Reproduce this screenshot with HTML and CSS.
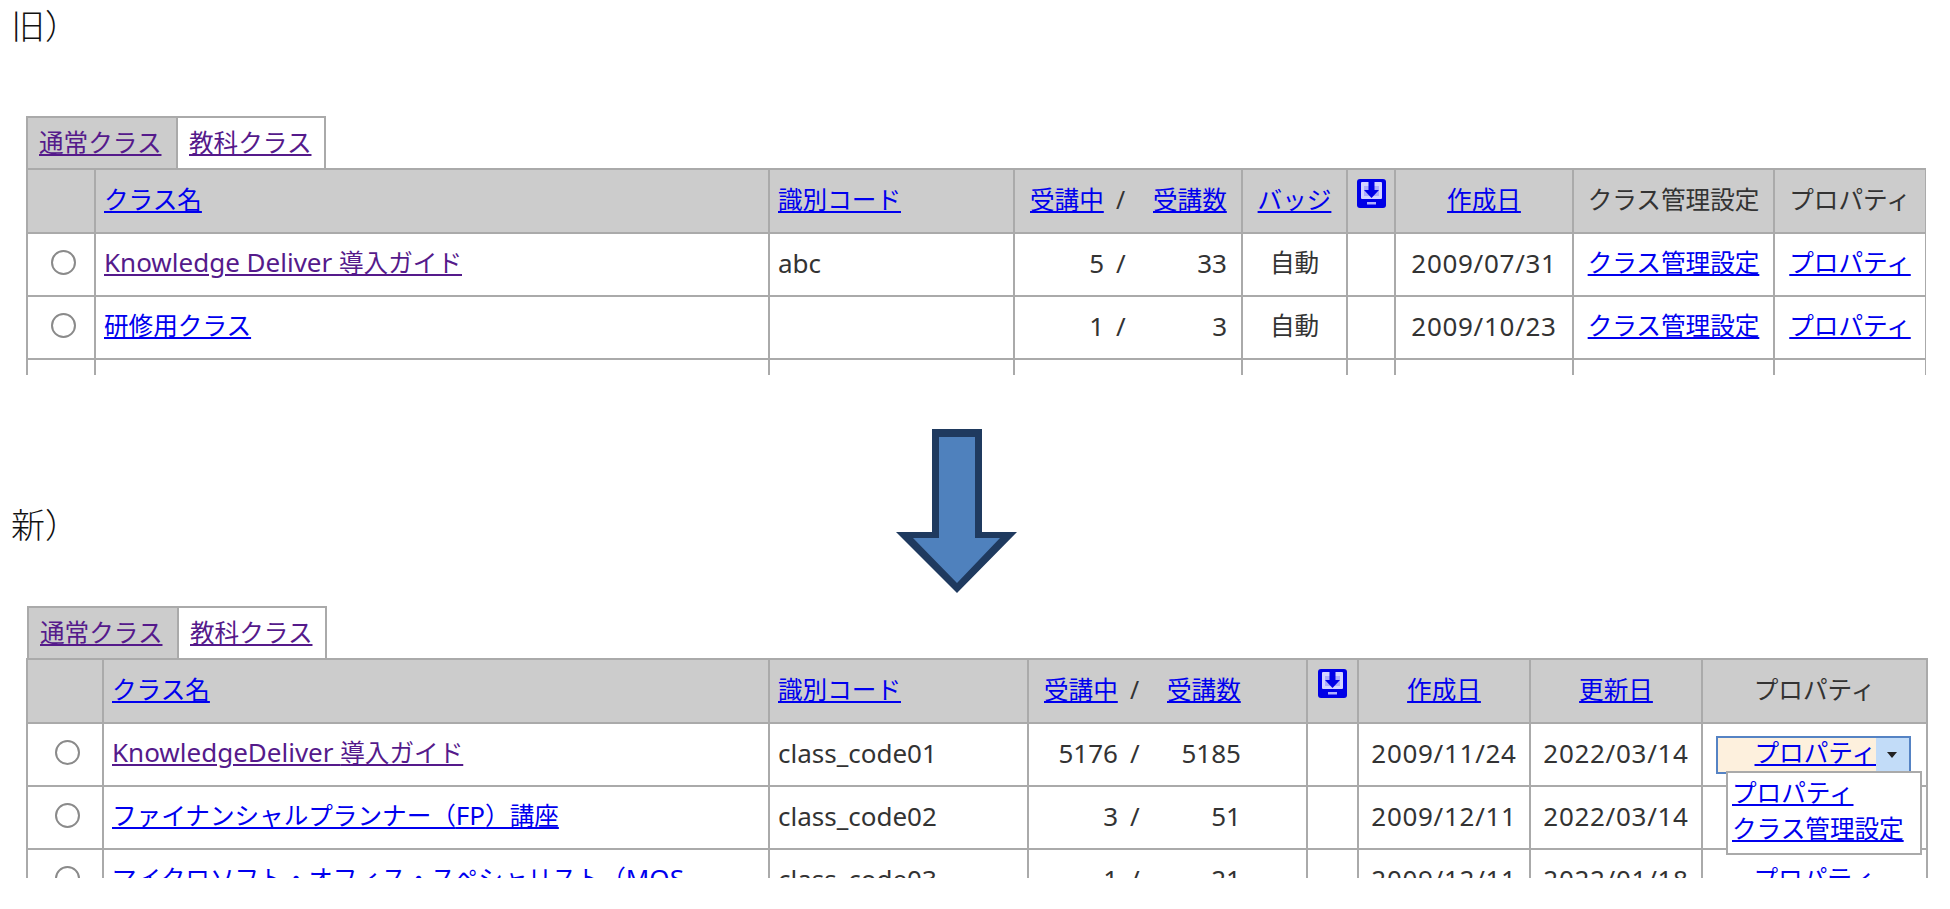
FILE: index.html
```html
<!DOCTYPE html>
<html lang="ja">
<head>
<meta charset="utf-8">
<title>クラス一覧 新旧比較</title>
<link rel="stylesheet" href="styles.css">
</head>
<body>
<section class="old">
  <h2 class="label label-old">旧）</h2>
  <ul class="tabs">
    <li class="tab tab-off"><a class="seen" href="#">通常クラス</a></li>
    <li class="tab tab-on"><a class="seen" href="#">教科クラス</a></li>
  </ul>
  <div class="clip clip-old">
    <table class="grid grid-old">
      <colgroup><col class="o1"><col class="o2"><col class="o3"><col class="o4"><col class="o5"><col class="o6"><col class="o7"><col class="o8"><col class="o9"></colgroup>
      <thead>
        <tr>
          <th></th>
          <th class="left"><a href="#">クラス名</a></th>
          <th class="left"><a href="#">識別コード</a></th>
          <th class="left"><div class="count"><a href="#">受講中</a><span class="slash">/</span><a href="#">受講数</a></div></th>
          <th><a href="#">バッジ</a></th>
          <th class="top"><a href="#" class="dl"><svg viewBox="0 0 29 29" width="29" height="29"><rect width="29" height="29" rx="3" fill="#0000e6"/><rect x="4" y="3" width="21" height="17" rx="1" fill="#d4d4ff"/><path d="M7 7h15v10H7z" fill="#aeaefa"/><path d="M11.500 3h6v8h4.500l-7.500 8L7 11h4.500z" fill="#0000e6"/><rect x="10" y="23" width="9" height="2.500" fill="#b0b0ff"/></svg></a></th>
          <th><a href="#">作成日</a></th>
          <th>クラス管理設定</th>
          <th>プロパティ</th>
        </tr>
      </thead>
      <tbody>
        <tr>
          <td class="center"><input class="radio" type="radio" name="old"></td>
          <td><a class="seen" href="#"><span class="la">Knowledge Deliver </span>導入ガイド</a></td>
          <td class="la">abc</td>
          <td class="la"><div class="count"><span class="r">5</span><span class="slash">/</span><span class="r">33</span></div></td>
          <td class="center">自動</td>
          <td></td>
          <td class="center date">2009/07/31</td>
          <td class="center"><a href="#">クラス管理設定</a></td>
          <td class="center"><a href="#">プロパティ</a></td>
        </tr>
        <tr>
          <td class="center"><input class="radio" type="radio" name="old"></td>
          <td><a href="#">研修用クラス</a></td>
          <td></td>
          <td class="la"><div class="count"><span class="r">1</span><span class="slash">/</span><span class="r">3</span></div></td>
          <td class="center">自動</td>
          <td></td>
          <td class="center date">2009/10/23</td>
          <td class="center"><a href="#">クラス管理設定</a></td>
          <td class="center"><a href="#">プロパティ</a></td>
        </tr>
        <tr><td></td><td></td><td></td><td></td><td></td><td></td><td></td><td></td><td></td></tr>
      </tbody>
    </table>
  </div>
</section>

<div class="divider">
  <h2 class="label label-new">新）</h2>
  <svg class="arrow" viewBox="0 0 121 164" width="121" height="164">
    <path d="M36 0h50v103h35L61 164 0 103h36z" fill="#1f3a5f"/>
    <path d="M43 8h36v101h25L61 154 17 109h26z" fill="#4f81bd"/>
  </svg>
</div>

<section class="new">
  <ul class="tabs">
    <li class="tab tab-off"><a class="seen" href="#">通常クラス</a></li>
    <li class="tab tab-on"><a class="seen" href="#">教科クラス</a></li>
  </ul>
  <div class="clip clip-new">
    <table class="grid grid-new">
      <colgroup><col class="n1"><col class="n2"><col class="n3"><col class="n4"><col class="n5"><col class="n6"><col class="n7"><col class="n8"></colgroup>
      <thead>
        <tr>
          <th></th>
          <th class="left"><a href="#">クラス名</a></th>
          <th class="left"><a href="#">識別コード</a></th>
          <th class="left"><div class="count"><a href="#">受講中</a><span class="slash">/</span><a href="#">受講数</a></div></th>
          <th class="top"><a href="#" class="dl"><svg viewBox="0 0 29 29" width="29" height="29"><rect width="29" height="29" rx="3" fill="#0000e6"/><rect x="4" y="3" width="21" height="17" rx="1" fill="#d4d4ff"/><path d="M7 7h15v10H7z" fill="#aeaefa"/><path d="M11.500 3h6v8h4.500l-7.500 8L7 11h4.500z" fill="#0000e6"/><rect x="10" y="23" width="9" height="2.500" fill="#b0b0ff"/></svg></a></th>
          <th><a href="#">作成日</a></th>
          <th><a href="#">更新日</a></th>
          <th>プロパティ</th>
        </tr>
      </thead>
      <tbody>
        <tr>
          <td class="center"><input class="radio" type="radio" name="new"></td>
          <td><a class="seen" href="#"><span class="la">KnowledgeDeliver </span>導入ガイド</a></td>
          <td class="la">class_code01</td>
          <td class="la"><div class="count"><span class="r">5176</span><span class="slash">/</span><span class="r">5185</span></div></td>
          <td></td>
          <td class="center date">2009/11/24</td>
          <td class="center date">2022/03/14</td>
          <td class="prop">
            <div class="prop-wrap">
              <div class="prop-btn"><a class="prop-main" href="#">プロパティ</a><span class="prop-caret"></span></div>
              <ul class="menu">
                <li><a href="#">プロパティ</a></li>
                <li><a href="#">クラス管理設定</a></li>
              </ul>
            </div>
          </td>
        </tr>
        <tr>
          <td class="center"><input class="radio" type="radio" name="new"></td>
          <td><a href="#">ファイナンシャルプランナー（<span class="la">FP</span>）講座</a></td>
          <td class="la">class_code02</td>
          <td class="la"><div class="count"><span class="r">3</span><span class="slash">/</span><span class="r">51</span></div></td>
          <td></td>
          <td class="center date">2009/12/11</td>
          <td class="center date">2022/03/14</td>
          <td class="prop-plain"></td>
        </tr>
        <tr>
          <td class="center"><input class="radio" type="radio" name="new"></td>
          <td><a href="#">マイクロソフト・オフィス・スペシャリスト（<span class="la">MOS</span></a></td>
          <td class="la">class_code03</td>
          <td class="la"><div class="count"><span class="r">1</span><span class="slash">/</span><span class="r">21</span></div></td>
          <td></td>
          <td class="center date">2009/12/11</td>
          <td class="center date">2022/01/18</td>
          <td class="prop-plain"><a href="#">プロパティ</a></td>
        </tr>
      </tbody>
    </table>
  </div>
</section>
</body>
</html>
```
FILE: styles.css
```css
* { box-sizing: border-box; }
html, body { margin: 0; padding: 0; background: #fff; }
body {
  width: 1950px;
  height: 909px;
  overflow: hidden;
  font-family: "Noto Sans", "Noto Sans CJK JP", sans-serif;
  font-size: 24.6px;
  color: #333;
}
a { color: #0000ee; text-decoration: underline; }
a.seen { color: #551a8b; }

.label {
  margin: 0;
  font-family: "Noto Sans CJK JP", sans-serif;
  font-size: 34px;
  font-weight: 200;
  line-height: 40px;
  color: #111;
}
.label-old { height: 116px; padding: 5px 0 0 11px; }
.label-new { margin: 75px 0 0 11px; width: 885px; flex: none; }

.old { padding-left: 26px; }
.old .label { margin-left: -26px; }
.new { padding-left: 26px; }
.new .tabs { margin-left: 1px; }
.divider { display: flex; align-items: flex-start; margin-top: 54px; height: 177px; }
.arrow { display: block; flex: none; }

.tabs { display: flex; margin: 0; padding: 0; list-style: none; height: 52px; }
.tab { height: 52px; padding: 10px 0 0 11px; line-height: 30px; white-space: nowrap; }
.tab-off { width: 150px; background: #ccc; border-top: 2px solid #aaa; border-left: 2px solid #aaa; }
.tab-on { width: 150px; background: #fff; border: 2px solid #aaa; border-bottom: 0; }

.clip { overflow: hidden; }
.clip-old { height: 207px; width: 1900px; }
.clip-new { height: 220px; width: 1902px; }

.grid { border-collapse: collapse; table-layout: fixed; width: 100%; line-height: 30px; }
.grid th, .grid td {
  border: 2px solid #aaa;
  padding: 0 8px;
  text-align: left;
  font-weight: 400;
  vertical-align: middle;
}
.grid td { padding-bottom: 4px; }
.grid th { padding-bottom: 2px; }
.grid tr { height: 63px; }
.grid thead tr { height: 64px; }
.grid th { background: #ccc; text-align: center; }
.grid th.left { text-align: left; }
.grid th.top { vertical-align: top; padding: 9px 0 0; text-align: center; }
.grid td.center { text-align: center; padding: 0 0 4px; }

.o1 { width: 68px; } .o2 { width: 674px; } .o3 { width: 245px; } .o4 { width: 228px; }
.o5 { width: 105px; } .o6 { width: 48px; } .o7 { width: 178px; } .o8 { width: 201px; } .o9 { width: 152px; }
.n1 { width: 76px; } .n2 { width: 666px; } .n3 { width: 259px; } .n4 { width: 279px; }
.n5 { width: 51px; } .n6 { width: 172px; } .n7 { width: 172px; } .n8 { width: 225px; }

.la { font-size: 26px; }
.date { font-size: 26px; letter-spacing: 0.7px; white-space: nowrap; }
.dl { display: block; height: 29px; line-height: 0; }
.count { display: grid; grid-template-columns: 74px 49px 74px; margin-left: 7px; white-space: nowrap; }
.count .r { text-align: right; }
.slash { padding-left: 12px; }
.radio {
  appearance: none;
  display: block;
  width: 25px;
  height: 25px;
  margin: 0 auto;
  position: relative;
  left: 2px;
  border: 2px solid #8a8a8a;
  border-radius: 50%;
  background: #fff;
}

.grid td.prop { padding: 0 0 0 13px; overflow: visible; }
.prop-wrap { position: relative; width: 195px; }
.prop-btn {
  display: flex;
  height: 38px;
  border: 2px solid #5583c4;
  background: #fdf0dd;
  line-height: 30px;
}
.prop-main { flex: 1; text-align: right; }
.prop-caret { width: 33px; background: #c2dcf8; position: relative; flex: none; }
.prop-caret::after {
  content: "";
  position: absolute;
  left: 11px;
  top: 14px;
  border-style: solid;
  border-width: 6px 5px 0;
  border-color: #222 transparent transparent;
}
.menu {
  position: absolute;
  z-index: 2;
  top: 35px;
  left: 10px;
  width: 196px;
  height: 84px;
  margin: 0;
  padding: 2px 0 0 4px;
  list-style: none;
  background: #fff;
  border: 2px solid #aaa;
  line-height: 36px;
  white-space: nowrap;
}
.grid td.prop-plain { text-align: right; padding: 0 51px 4px 0; }
```
